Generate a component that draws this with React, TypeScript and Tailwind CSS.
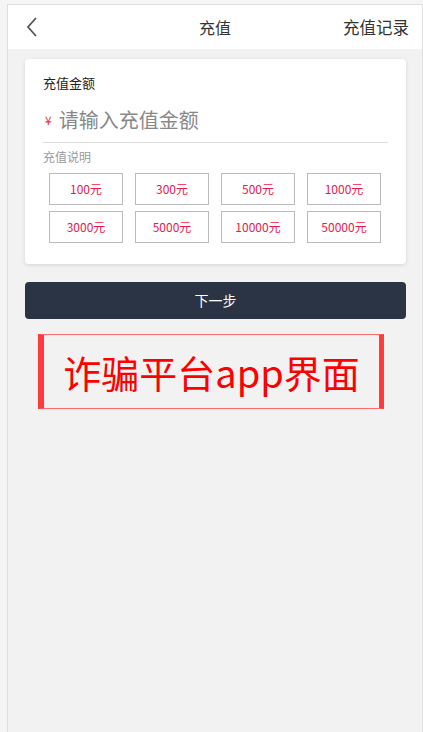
import React from "react";

const amounts = ["100元", "300元", "500元", "1000元", "3000元", "5000元", "10000元", "50000元"];

const App = () => {
	return (
		<div
			className="min-h-[732px] bg-[#f5f5f5] pl-[7px] pt-[4px]"
			style={{ fontFamily: '"Noto Sans CJK SC", "Noto Sans", sans-serif' }}
		>
			<div className="w-[416px] min-h-[728px] border border-[#dedede] border-b-0 bg-[#f2f2f2]">
				{/* Header */}
				<div className="relative flex h-[44px] items-center bg-white pl-[14px] pr-[13px]">
					<svg width="14" height="22" viewBox="0 0 14 22" className="ml-[3px]">
						<path d="M11 2 L3 11 L11 20" fill="none" stroke="#555" strokeWidth="1.8" />
					</svg>
					<span className="absolute left-1/2 -translate-x-1/2 text-[16px] text-[#333]">充值</span>
					<span className="ml-auto text-[16.5px] text-[#333]">充值记录</span>
				</div>

				<div className="pl-[17px] pr-[16px] pt-[10px]">
					{/* Card */}
					<div className="rounded-[4px] bg-white px-[18px] pt-[14px] pb-[21px] shadow-[0_1px_4px_rgba(0,0,0,0.12)]">
						<p className="text-[13px] leading-[20px] text-[#222]">充值金额</p>
						<div className="mt-[13px] flex items-center border-b border-[#ddd] pb-[8px]">
							<span className="ml-[2px] text-[12px] text-[#e33]">¥</span>
							<span className="ml-[7px] text-[20px] leading-[28px] text-[#888]">请输入充值金额</span>
						</div>
						<p className="mt-[5px] text-[12px] leading-[18px] text-[#999]">充值说明</p>
						<div className="mt-[7px] grid grid-cols-4 gap-x-[12px] gap-y-[6px] pl-[6px] pr-[7px]">
							{amounts.map((a) => (
								<div
									key={a}
									className="flex h-[32px] items-center justify-center border border-[#bbb] text-[12px] text-[#f0154a]"
								>
									{a}
								</div>
							))}
						</div>
					</div>

					{/* Next button */}
					<button className="mt-[18px] flex h-[37px] w-full items-center justify-center rounded-[4px] bg-[#2b3445] text-[14px] text-white">
						下一步
					</button>

					{/* Watermark */}
					<div className="ml-[13px] mt-[15px] flex h-[75px] w-[346px] items-center justify-center border border-[#ff6b6b] border-l-[6px] border-r-[5px] border-l-[#ff3b3b] border-r-[#ff3b3b] bg-[#f2f2f2]">
						<span className="text-[38px] leading-none text-[#ff0000]">诈骗平台app界面</span>
					</div>
				</div>
			</div>
		</div>
	);
};

export default App;
